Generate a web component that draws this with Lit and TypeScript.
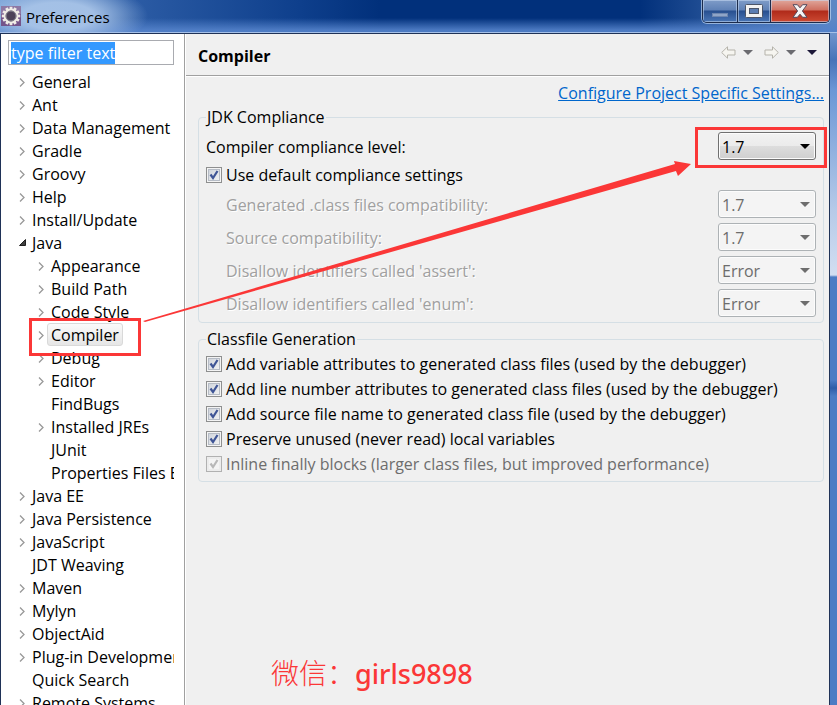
import { LitElement, html, css, svg, nothing } from "lit";
import { customElement, state, query } from "lit/decorators.js";
import { classMap } from "lit/directives/class-map.js";

interface TreeItem {
  label: string;
  leaf?: boolean;
  open?: boolean;
  children?: TreeItem[];
}

interface Combo {
  label: string;
  value: string;
}

interface Check {
  label: string;
  disabled?: boolean;
}

const TREE: TreeItem[] = [
  { label: "General" },
  { label: "Ant" },
  { label: "Data Management" },
  { label: "Gradle" },
  { label: "Groovy" },
  { label: "Help" },
  { label: "Install/Update" },
  {
    label: "Java",
    open: true,
    children: [
      { label: "Appearance" },
      { label: "Build Path" },
      { label: "Code Style" },
      { label: "Compiler" },
      { label: "Debug" },
      { label: "Editor" },
      { label: "FindBugs", leaf: true },
      { label: "Installed JREs" },
      { label: "JUnit", leaf: true },
      { label: "Properties Files Editor", leaf: true },
    ],
  },
  { label: "Java EE" },
  { label: "Java Persistence" },
  { label: "JavaScript" },
  { label: "JDT Weaving", leaf: true },
  { label: "Maven" },
  { label: "Mylyn" },
  { label: "ObjectAid" },
  { label: "Plug-in Development" },
  { label: "Quick Search", leaf: true },
  { label: "Remote Systems" },
];

const COMBOS: Combo[] = [
  { label: "Generated .class files compatibility:", value: "1.7" },
  { label: "Source compatibility:", value: "1.7" },
  { label: "Disallow identifiers called 'assert':", value: "Error" },
  { label: "Disallow identifiers called 'enum':", value: "Error" },
];

const CHECKS: Check[] = [
  { label: "Add variable attributes to generated class files (used by the debugger)" },
  { label: "Add line number attributes to generated class files (used by the debugger)" },
  { label: "Add source file name to generated class file (used by the debugger)" },
  { label: "Preserve unused (never read) local variables" },
  { label: "Inline finally blocks (larger class files, but improved performance)", disabled: true },
];

const TEETH = Array.from({ length: 12 }, (_, i) => i * 30);

@customElement("app-root")
export class AppRoot extends LitElement {
  static styles = css`
    :host {
      display: block;
      font-family: "Open Sans", "Noto Sans", "Noto Sans CJK SC", sans-serif;
      font-size: 16px;
      line-height: 22px;
      color: #000;
    }
    * {
      box-sizing: border-box;
    }
    button,
    input,
    select {
      font: inherit;
      color: inherit;
      margin: 0;
    }
    .window {
      display: flex;
      flex-direction: column;
      height: 100vh;
      overflow: hidden;
      padding-right: 7px;
      background: linear-gradient(#6d93cc 34px, #4673b8 60px, #6b97d6 90px, #b6cae8 210px, #d2def1 275px, #4c7cc4 277px, #4c7cc4 380px, #2f5da8 388px, #4c7cc4 396px);
    }
    .titlebar {
      flex: none;
      display: flex;
      align-items: flex-start;
      height: 33px;
      margin-right: -7px;
      padding-right: 7px;
      border-bottom: 1px solid #a5c0e8;
      background:
        radial-gradient(ellipse 90px 34px at 58px 16px, rgba(168, 196, 232, 0.95) 40%, rgba(120, 160, 214, 0) 100%),
        linear-gradient(rgba(60, 110, 185, 0) 18px, rgba(84, 130, 202, 0.9) 30px),
        linear-gradient(90deg, #6f9ad2 0, #2c5ca5 130px, #0e3f8c 300px, #01307b 380px, #01307b 640px, #5d87c4 830px);
    }
    .app-icon {
      flex: none;
      width: 20px;
      height: 20px;
      margin: 6px 5px 0 1px;
    }
    .title {
      flex: 1;
      margin: 0;
      padding-top: 6px;
      font-size: 15px;
      font-weight: 400;
    }
    .caption {
      display: flex;
      height: 23px;
      border: 1px solid #1c2c4c;
      border-top: 0;
      border-radius: 0 0 5px 5px;
      overflow: hidden;
      box-shadow: 0 0 0 1px rgba(190, 212, 240, 0.7);
    }
    .cap {
      display: grid;
      place-items: center;
      width: 33px;
      padding: 0;
      border: 0;
      border-right: 1px solid #1c2c4c;
      background: linear-gradient(#7f9cc8 0, #5f81b6 10px, #284f8f 11px, #4a76b6 22px);
      box-shadow: inset 0 0 0 1px rgba(200, 218, 242, 0.55);
    }
    .cap.min {
      width: 35px;
    }
    .cap.close {
      width: 58px;
      border-right: 0;
      background: linear-gradient(#e0a79c 0, #cf6f60 10px, #b02a1a 11px, #cc4a33 22px);
    }
    .body {
      flex: 1;
      display: flex;
      min-height: 0;
      border: 1px solid #1f3257;
      border-bottom: 0;
      background: #f0f0f0;
    }
    .side {
      flex: none;
      width: 184px;
      padding: 6px 10px 0 7px;
      border-right: 1px solid #a0a0a0;
      background: #fff;
    }
    .filter {
      display: block;
      width: 100%;
      height: 25px;
      padding: 1px 2px;
      border: 1px solid #a9abb0;
      border-radius: 0;
      outline: 0;
      line-height: 20px;
      background: #fff;
    }
    .filter::selection {
      color: #fff;
      background: #3399ff;
    }
    .tree,
    .branch {
      margin: 0;
      padding: 0;
      list-style: none;
    }
    .tree {
      padding-top: 5px;
      height: calc(100% - 25px);
      overflow: hidden;
    }
    .branch {
      padding-left: 19px;
    }
    .row {
      position: relative;
      display: flex;
      align-items: center;
      height: 23px;
      padding-left: 8px;
      white-space: nowrap;
    }
    .twisty {
      display: grid;
      place-items: center;
      flex: none;
      width: 12px;
      height: 12px;
      padding: 0;
      border: 0;
      background: none;
    }
    .twisty.none {
      visibility: hidden;
    }
    .name {
      padding: 2px 3px 0;
      border: 1px solid transparent;
      border-radius: 3px;
      line-height: 19px;
      cursor: default;
    }
    .name.selected {
      border-color: #d9d9d9;
      background: linear-gradient(#fafafa, #e6e6e6);
    }
    .mark {
      position: absolute;
      z-index: 2;
      border: 3px solid #fb3737;
      pointer-events: none;
    }
    .mark.on-row {
      left: 2px;
      top: -5px;
      width: 112px;
      height: 38px;
    }
    .mark.on-combo {
      inset: -5px -11px -8px -23px;
    }
    .main {
      position: relative;
      flex: 1;
      min-width: 0;
      display: flex;
      flex-direction: column;
      border-left: 1px solid #fff;
    }
    .head {
      flex: none;
      display: flex;
      align-items: center;
      height: 42px;
      padding: 2px 12px 0;
      border-bottom: 1px solid #a0a0a0;
      box-shadow: 0 1px #fff;
    }
    .heading {
      flex: 1;
      margin: 0;
      font-size: 16px;
      font-weight: 700;
    }
    .nav {
      display: flex;
      align-items: center;
      gap: 11px;
      padding-bottom: 7px;
    }
    .pair {
      display: flex;
      align-items: center;
      gap: 7px;
    }
    .tool {
      display: grid;
      place-items: center;
      padding: 0;
      border: 0;
      background: none;
    }
    .page {
      display: flex;
      flex-direction: column;
      padding: 6px 5px 0 12px;
    }
    .project-link {
      align-self: flex-end;
      margin-bottom: 2px;
      color: #0066cc;
      text-decoration: underline;
    }
    .group {
      min-width: 0;
      margin: 0 0 5px;
      padding: 1px 7px 5px;
      border: 1px solid #d5dfe5;
      border-radius: 4px;
    }
    .legend {
      padding: 0 1px;
      line-height: 22px;
    }
    .line {
      display: flex;
      align-items: center;
      justify-content: space-between;
      height: 28px;
      margin-bottom: 5px;
    }
    .line.first {
      margin: 3px 0 0;
    }
    .line:last-child {
      margin-bottom: 0;
    }
    .line label {
      padding-top: 2px;
    }
    .line.off label {
      padding-left: 20px;
      color: #a0a0a0;
      text-shadow: 1px 1px #fff;
    }
    .combo {
      position: relative;
      flex: none;
      width: 98px;
      height: 28px;
    }
    .combo select {
      appearance: none;
      width: 100%;
      height: 100%;
      padding: 1px 20px 0 3px;
      border: 1px solid #707070;
      border-radius: 3px;
      opacity: 1;
      background: linear-gradient(#f2f2f2, #ebebeb 50%, #dddddd 50%, #cfcfcf);
      box-shadow: inset 0 0 0 1px #fcfcfc;
    }
    .combo select:disabled {
      border-color: #adb2b5;
      color: #6d6d6d;
      background: #f4f4f4;
    }
    .combo .drop {
      position: absolute;
      right: 6px;
      top: 12px;
      pointer-events: none;
    }
    .check {
      display: flex;
      align-items: center;
      gap: 4px;
      height: 25px;
      white-space: nowrap;
    }
    .check.tall {
      height: 30px;
    }
    .check.off {
      color: #6d6d6d;
    }
    .tick {
      position: relative;
      display: grid;
      flex: none;
      width: 16px;
      height: 16px;
    }
    .tick input {
      appearance: none;
      width: 16px;
      height: 16px;
      border: 1px solid #8e8f8f;
      background: linear-gradient(135deg, #cbd0d8, #f6f6f6);
      box-shadow: inset 0 0 0 1px #f4f4f4, inset 0 0 0 2px #b6bcc6;
    }
    .tick input:disabled {
      border-color: #b1b1b1;
      background: #f4f4f4;
      box-shadow: inset 0 0 0 2px #ececec;
    }
    .tick svg {
      position: absolute;
      inset: 0;
      pointer-events: none;
      visibility: hidden;
    }
    .tick input:checked + svg {
      visibility: visible;
    }
    .arrow {
      position: absolute;
      z-index: 1;
      left: -43px;
      top: 126px;
      width: calc(100% - 94px);
      height: 162px;
      pointer-events: none;
    }
    .contact {
      margin: 167px 0 0 73px;
      font-family: "Noto Sans", sans-serif;
      font-size: 27px;
      line-height: 36px;
      font-weight: 500;
      color: #fb3737;
      white-space: nowrap;
    }
    .contact .zh {
      font-family: "Noto Sans CJK SC", sans-serif;
      font-weight: 300;
      font-size: 28px;
    }
  `;

  @state() private selected = "Compiler";
  @query(".filter") private filter!: HTMLInputElement;

  firstUpdated() {
    this.filter.focus();
    this.filter.select();
  }

  private twisty(item: TreeItem) {
    const shape = item.open
      ? svg`<path d="M9.5 2.5V8.5H3.5Z" fill="#404040" stroke="#202020" />`
      : svg`<path d="M4 2.5L8 6.5L4 10.5" fill="none" stroke="#989898" stroke-width="1.3" />`;
    return html`<button
      class=${classMap({ twisty: true, none: !!item.leaf })}
      tabindex="-1"
      aria-label=${item.open ? "Collapse" : "Expand"}
    ><svg width="12" height="12">${shape}</svg></button>`;
  }

  private node(item: TreeItem): unknown {
    const on = item.label === this.selected;
    return html`<li role="treeitem" aria-selected=${on}>
      <div class="row">
        ${this.twisty(item)}
        <span class=${classMap({ name: true, selected: on })} @click=${() => (this.selected = item.label)}>${item.label}</span>
        ${item.label === "Compiler" ? html`<span class="mark on-row"></span>` : nothing}
      </div>
      ${item.children ? html`<ul class="branch" role="group">${item.children.map((c) => this.node(c))}</ul>` : nothing}
    </li>`;
  }

  private triangle(color: string, cls = "") {
    return html`<svg class=${cls} width="10" height="5"><path d="M0 0H10L5 5Z" fill=${color} /></svg>`;
  }

  private check(item: Check, id: string, tall = false) {
    return html`<div class=${classMap({ check: true, tall, off: !!item.disabled })}>
      <span class="tick">
        <input type="checkbox" id=${id} checked ?disabled=${!!item.disabled} />
        <svg width="16" height="16">
          <path d="M4.5 7.5L7 11L11.5 4" fill="none" stroke=${item.disabled ? "#b8b8b8" : "#3f5596"} stroke-width="2.2" />
        </svg>
      </span>
      <label for=${id}>${item.label}</label>
    </div>`;
  }

  private combo(item: Combo, id: string, enabled = false) {
    return html`<div class=${classMap({ line: true, first: enabled, off: !enabled })}>
      <label for=${id}>${item.label}</label>
      <span class="combo">
        <select id=${id} ?disabled=${!enabled}><option>${item.value}</option></select>
        ${this.triangle(enabled ? "#000" : "#6d6d6d", "drop")}
        ${enabled ? html`<span class="mark on-combo"></span>` : nothing}
      </span>
    </div>`;
  }

  render() {
    return html`
      <div class="window">
        <header class="titlebar">
          <svg class="app-icon" viewBox="0 0 20 20">
            <rect width="20" height="20" fill="#74548a" />
            <rect width="20" height="8" fill="#8d78a4" />
            <g fill="#efece6">
              ${TEETH.map((a) => svg`<rect x="8.6" y="0.8" width="2.8" height="4" transform="rotate(${a} 10 10)" />`)}
            </g>
            <circle cx="10" cy="10" r="6.4" fill="#4c4258" stroke="#efece6" stroke-width="2" />
            <circle cx="10" cy="10" r="5" fill="none" stroke="#8b8a96" />
          </svg>
          <h1 class="title">Preferences</h1>
          <div class="caption">
            <button class="cap min" aria-label="Minimize">
              <svg width="18" height="14"><rect x="1.5" y="9.5" width="15" height="3" fill="#8fa5c8" stroke="#6d86b0" /></svg>
            </button>
            <button class="cap max" aria-label="Maximize">
              <svg width="18" height="14">
                <rect x="0.5" y="0.5" width="17" height="13" rx="1" fill="#f2f2f2" stroke="#4c5568" />
                <rect x="4.5" y="4.5" width="9" height="5" fill="#5b7db2" stroke="#4c5568" />
              </svg>
            </button>
            <button class="cap close" aria-label="Close">
              <svg width="16" height="14" viewBox="0 0 16 14">
                <path d="M1 .7H5.4L8 3.8L10.6 .7H15L10.4 7L15 13.3H10.6L8 10.2L5.4 13.3H1L5.6 7Z" fill="#f4f4f4" stroke="#564a5c" />
              </svg>
            </button>
          </div>
        </header>
        <div class="body">
          <nav class="side">
            <input class="filter" type="text" aria-label="Filter" .value=${"type filter text"} />
            <ul class="tree" role="tree">${TREE.map((t) => this.node(t))}</ul>
          </nav>
          <main class="main">
            <div class="head">
              <h2 class="heading">Compiler</h2>
              <div class="nav">
                <div class="pair">
                  <button class="tool" aria-label="Back">
                    <svg width="15" height="13"><path d="M.7 6.5L6.5 .8V4H14V9H6.5V12.2Z" fill="#f6f5f0" stroke="#b5b3ab" /></svg>
                  </button>
                  <button class="tool" aria-label="Back history">${this.triangle("#6b6b70")}</button>
                </div>
                <div class="pair">
                  <button class="tool" aria-label="Forward">
                    <svg width="15" height="13"><path d="M14.3 6.5L8.5 .8V4H1V9H8.5V12.2Z" fill="#f6f5f0" stroke="#b5b3ab" /></svg>
                  </button>
                  <button class="tool" aria-label="Forward history">${this.triangle("#6b6b70")}</button>
                </div>
                <button class="tool" aria-label="Menu">${this.triangle("#1c1838")}</button>
              </div>
            </div>
            <div class="page">
              <a class="project-link" href="#">Configure Project Specific Settings...</a>
              <fieldset class="group">
                <legend class="legend">JDK Compliance</legend>
                ${this.combo({ label: "Compiler compliance level:", value: "1.7" }, "level", true)}
                ${this.check({ label: "Use default compliance settings" }, "defaults", true)}
                ${COMBOS.map((c, i) => this.combo(c, `combo-${i}`))}
              </fieldset>
              <fieldset class="group">
                <legend class="legend">Classfile Generation</legend>
                ${CHECKS.map((c, i) => this.check(c, `check-${i}`))}
              </fieldset>
              <p class="contact"><span class="zh">微信：</span>girls9898</p>
            </div>
            <svg class="arrow" viewBox="0 0 548 162" preserveAspectRatio="none" aria-hidden="true">
              <path d="M0 161L531 4L530 1L547 4L534 16L532 11L2 162Z" fill="#fb3737" />
            </svg>
          </main>
        </div>
      </div>
    `;
  }
}
